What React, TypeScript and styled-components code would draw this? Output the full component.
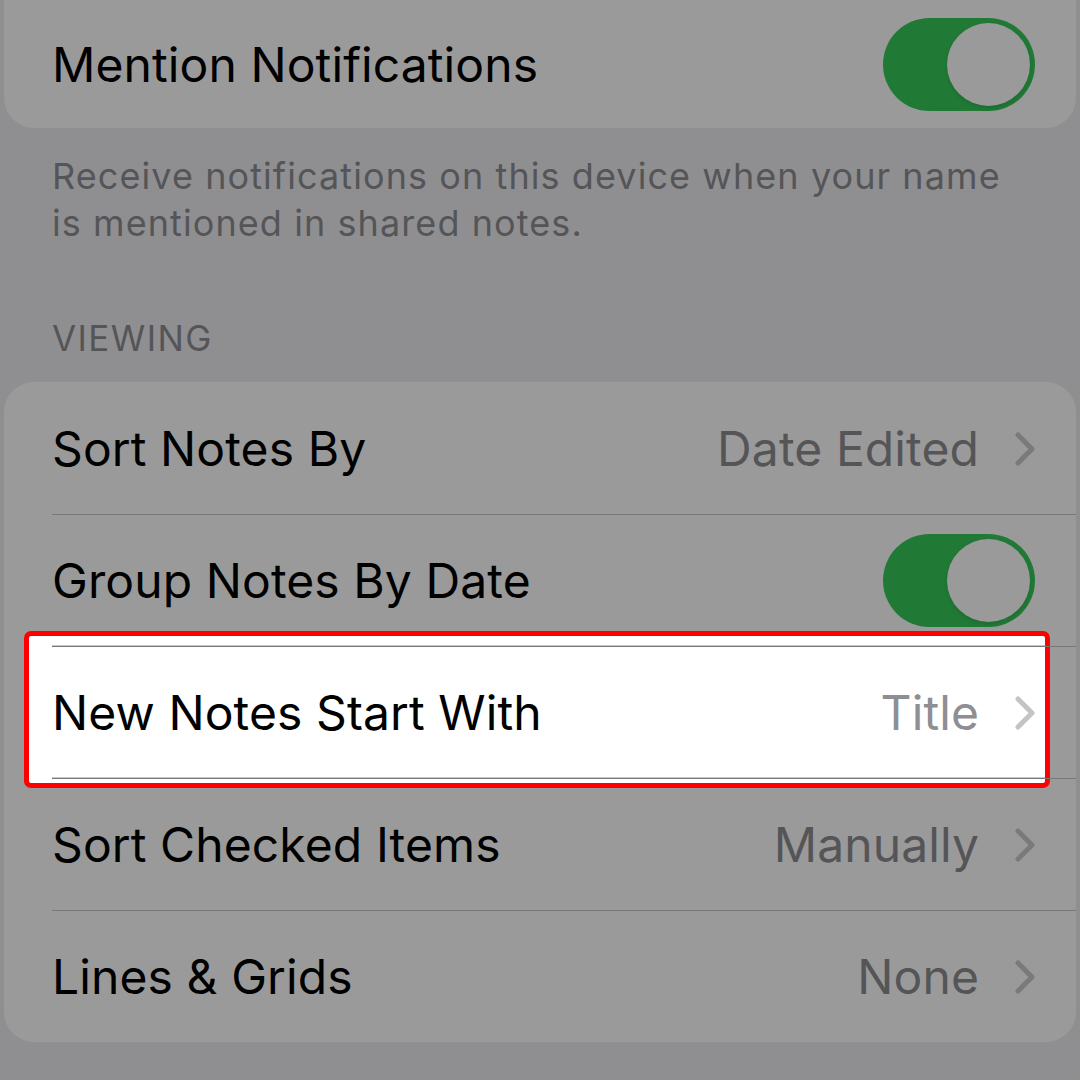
import React from "react";
import styled, { createGlobalStyle } from "styled-components";

const GlobalStyle = createGlobalStyle`
  html, body {
    margin: 0;
    padding: 0;
    background: #8f8f92;
  }
  body {
    font-family: Inter, "Noto Sans", "Liberation Sans", sans-serif;
    -webkit-font-smoothing: antialiased;
  }
`;

const Page = styled.div`
  width: 1080px;
  height: 1080px;
  overflow: hidden;
  display: flex;
  flex-direction: column;
  padding: 0 4px;
  box-sizing: border-box;
`;

const Group = styled.div<{ $flatTop?: boolean }>`
  background: #9a9a9a;
  border-radius: ${(p) => (p.$flatTop ? "0 0 30px 30px" : "30px")};
  display: flex;
  flex-direction: column;
`;

const Footer = styled.p`
  margin: 25px 0 0;
  padding: 0 40px 0 48px;
  font-size: 36px;
  line-height: 47px;
  letter-spacing: 1.08px;
  color: #555557;
`;

const Header = styled.h2`
  margin: 71px 0 24px;
  padding: 0 48px;
  font-size: 35px;
  line-height: 40px;
  font-weight: 400;
  color: #555557;
  letter-spacing: 1.4px;
`;

const Row = styled.div<{ $height?: number; $lifted?: boolean }>`
  height: ${(p) => p.$height ?? 132}px;
  display: flex;
  padding-left: 48px;
  ${(p) => (p.$lifted ? "position: relative; z-index: 1;" : "")}
`;

const RowInner = styled.div<{ $divider?: boolean }>`
  flex: 1;
  display: flex;
  align-items: center;
  justify-content: space-between;
  padding-right: 41px;
  border-top: 1px solid ${(p) => (p.$divider ? "#78787b" : "transparent")};
  position: relative;
  z-index: 1;
`;

const Label = styled.span`
  font-size: 48px;
  color: #000;
  letter-spacing: 0.1px;
`;

const ValueWrap = styled.span`
  display: flex;
  align-items: center;
  gap: 36px;
`;

const Value = styled.span<{ $light?: boolean }>`
  font-size: 48px;
  letter-spacing: 0.1px;
  color: ${(p) => (p.$light ? "#8e8e93" : "#555558")};
`;

const Spotlight = styled.div`
  position: absolute;
  left: 20px;
  right: 26px;
  top: -15px;
  bottom: -10px;
  background: #ffffff;
  border: 5px solid #ff0000;
  border-radius: 7px;
  z-index: 0;

  &::before,
  &::after {
    content: "";
    position: absolute;
    left: 23px;
    right: 0;
    height: 1px;
    background: #c8c8cc;
  }
  &::before {
    top: 9px;
  }
  &::after {
    bottom: 5px;
  }
`;

const Track = styled.div`
  width: 152px;
  height: 93px;
  border-radius: 47px;
  background: #207a36;
  display: flex;
  justify-content: flex-end;
  align-items: center;
  padding: 0 5px;
  box-sizing: border-box;
`;

const Thumb = styled.div`
  width: 83px;
  height: 83px;
  border-radius: 50%;
  background: #9a9a9a;
  box-shadow: 0 2px 4px rgba(0, 0, 0, 0.12);
`;

const Toggle = () => (
  <Track>
    <Thumb />
  </Track>
);

const Chevron = ({ light }: { light?: boolean }) => (
  <svg width="20" height="34" viewBox="0 0 20 34" fill="none">
    <path
      d="M3 3 L17 17 L3 31"
      stroke={light ? "#c4c4c7" : "#7a7a7c"}
      strokeWidth="5"
      strokeLinecap="round"
      strokeLinejoin="round"
    />
  </svg>
);

type Item = {
  label: string;
  value?: string;
  toggle?: boolean;
  highlighted?: boolean;
};

const items: Item[] = [
  { label: "Sort Notes By", value: "Date Edited" },
  { label: "Group Notes By Date", toggle: true },
  { label: "New Notes Start With", value: "Title", highlighted: true },
  { label: "Sort Checked Items", value: "Manually" },
  { label: "Lines & Grids", value: "None" },
];

export default function App() {
  return (
    <>
      <GlobalStyle />
      <Page>
        <Group $flatTop>
          <Row $height={128}>
            <RowInner>
              <Label>Mention Notifications</Label>
              <Toggle />
            </RowInner>
          </Row>
        </Group>
        <Footer>
          Receive notifications on this device when your name is mentioned in
          shared notes.
        </Footer>
        <Header>VIEWING</Header>
        <Group>
          {items.map((it, i) => (
            <Row key={it.label} $lifted={it.highlighted}>
              {it.highlighted && <Spotlight />}
              <RowInner $divider={i > 0}>
                <Label>{it.label}</Label>
                {it.toggle ? (
                  <Toggle />
                ) : (
                  <ValueWrap>
                    <Value $light={it.highlighted}>{it.value}</Value>
                    <Chevron light={it.highlighted} />
                  </ValueWrap>
                )}
              </RowInner>
            </Row>
          ))}
        </Group>
      </Page>
    </>
  );
}
